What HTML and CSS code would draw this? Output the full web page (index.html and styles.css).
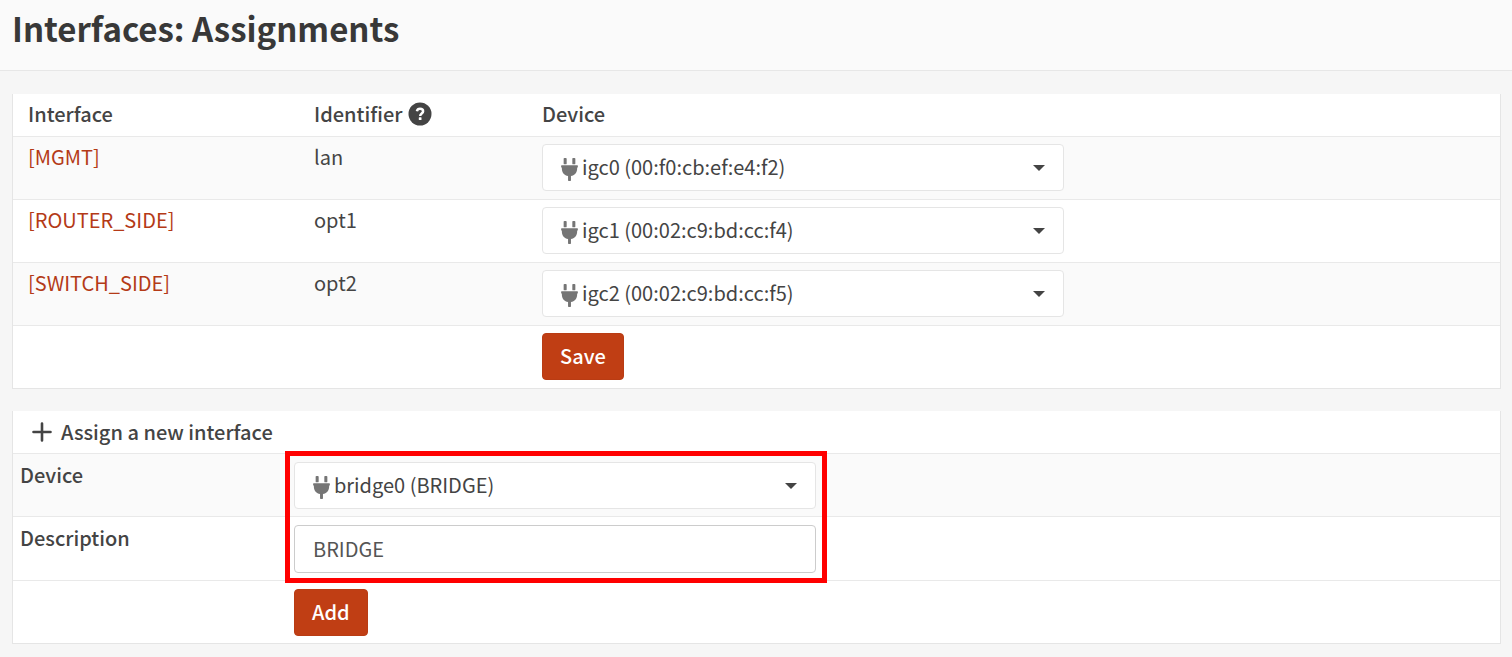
FILE: index.html
```html
<!DOCTYPE html>
<html lang="en">
<head>
<meta charset="utf-8">
<meta name="viewport" content="width=device-width, initial-scale=1">
<title>Interfaces: Assignments</title>
<link rel="stylesheet" href="styles.css">
</head>
<body>
<svg class="sprite" aria-hidden="true">
  <symbol id="plug" viewBox="0 0 16 22">
    <rect x="2.4" y="0" width="2.9" height="6" rx="0.8"/>
    <rect x="10.7" y="0" width="2.9" height="6" rx="0.8"/>
    <path d="M0.4 7H15.6Q16 7 16 7.4V8.600Q16 9.100 15.500 9.200L15.300 9.300V10.500C15.200 14 12.800 16.800 9.400 17.300V21.400Q9.400 22 8.800 22H7.200Q6.600 22 6.600 21.400V17.300C3.200 16.800 0.800 14 0.700 10.500V9.300L0.500 9.200Q0 9.100 0 8.600V7.400Q0 7 0.400 7Z"/>
  </symbol>
</svg>
<header class="page-head">
  <h1 class="page-title">Interfaces: Assignments</h1>
</header>
<main class="content">
  <form class="panel">
    <table class="table">
      <colgroup><col class="col-name"><col class="col-id"><col></colgroup>
      <thead>
        <tr>
          <th class="indent" scope="col">Interface</th>
          <th scope="col"><span class="with-icon">Identifier
            <svg class="help" viewBox="0 0 24 24" role="img" aria-label="Help"><circle cx="12" cy="12" r="11.500" fill="#444"/><path d="M8.900 9.200C9.300 7.500 10.400 6.800 12 6.800C13.900 6.800 15.100 7.800 15.100 9.300C15.100 11.500 12.200 11.500 12.200 13.900" fill="none" stroke="#fff" stroke-width="2.500"/><rect x="10.800" y="15.300" width="2.700" height="2.700" rx="0.500" fill="#fff"/></svg></span></th>
          <th scope="col">Device</th>
        </tr>
      </thead>
      <tbody>
        <tr>
          <td class="indent"><a class="link" href="#lan">[MGMT]</a></td>
          <td>lan</td>
          <td><div class="picker"><svg class="plug"><use href="#plug"/></svg><select class="field select" aria-label="Device for lan"><option>igc0 (00:f0:cb:ef:e4:f2)</option></select></div></td>
        </tr>
        <tr>
          <td class="indent"><a class="link" href="#opt1">[ROUTER_SIDE]</a></td>
          <td>opt1</td>
          <td><div class="picker"><svg class="plug"><use href="#plug"/></svg><select class="field select" aria-label="Device for opt1"><option>igc1 (00:02:c9:bd:cc:f4)</option></select></div></td>
        </tr>
        <tr>
          <td class="indent"><a class="link" href="#opt2">[SWITCH_SIDE]</a></td>
          <td>opt2</td>
          <td><div class="picker"><svg class="plug"><use href="#plug"/></svg><select class="field select" aria-label="Device for opt2"><option>igc2 (00:02:c9:bd:cc:f5)</option></select></div></td>
        </tr>
        <tr>
          <td></td>
          <td></td>
          <td><button class="btn" type="button">Save</button></td>
        </tr>
      </tbody>
    </table>
  </form>
  <form class="panel">
    <table class="table new-table">
      <colgroup><col class="col-label"><col></colgroup>
      <thead>
        <tr>
          <th class="new-head" colspan="2"><span class="with-icon"><svg class="plus" viewBox="0 0 20 20" aria-hidden="true"><path d="M10 1.500V18.500M1.500 10H18.500" fill="none" stroke="#444" stroke-width="2.600" stroke-linecap="round"/></svg>Assign a new interface</span></th>
        </tr>
      </thead>
      <tbody>
        <tr>
          <td><label class="label" for="new-device">Device</label></td>
          <td><div class="picker highlighted"><svg class="plug"><use href="#plug"/></svg><select class="field select" id="new-device"><option>bridge0 (BRIDGE)</option></select></div></td>
        </tr>
        <tr>
          <td><label class="label" for="new-desc">Description</label></td>
          <td><input class="field input" id="new-desc" type="text" value="BRIDGE"></td>
        </tr>
        <tr>
          <td></td>
          <td><button class="btn" type="button">Add</button></td>
        </tr>
      </tbody>
    </table>
  </form>
</main>
</body>
</html>
```
FILE: styles.css
```css
* { box-sizing: border-box; }

body {
  margin: 0;
  background: #f6f6f6;
  color: #444;
  font: 400 20px/28px "Noto Sans CJK SC", "Open Sans", sans-serif;
}

.sprite { position: absolute; width: 0; height: 0; }

.page-head {
  padding: 6px 12px 20px;
  background: #fafafa;
  border-bottom: 1px solid #e7e7e7;
}

.page-title {
  margin: 0;
  color: #383838;
  font-size: 33px;
  font-weight: 700;
  line-height: 44px;
}

.content {
  display: flex;
  flex-direction: column;
  gap: 22px;
  padding: 23px 11px 13px 12px;
}

.panel {
  margin: 0;
  background: #fff;
  border: 1px solid #e5e5e5;
  border-top: 0;
}

.table {
  width: 100%;
  border-collapse: separate;
  border-spacing: 0;
  table-layout: fixed;
}

.col-name { width: 293px; }
.col-id { width: 228px; }
.col-label { width: 273px; }

.table th,
.table td {
  padding: 7px 8px;
  text-align: left;
  vertical-align: top;
}

.table th {
  padding: 6px 8px 8px;
  font-weight: 500;
}

.table td {
  padding-bottom: 8px;
  border-top: 1px solid #e9e9e9;
}

.table td:not(:last-child) { padding-top: 6px; }

.new-table td:last-child { padding: 8px 8px 7px; }
.table.new-table td:first-child { padding: 7px; }
.table.new-table th { padding: 7px 19px; }

.table tbody tr:nth-child(odd) td { background: #fafafa; }
.table tbody tr:last-child td,
.table tbody tr:nth-child(even) td { background: #fff; }

.table .indent { padding-left: 15px; }

.with-icon { display: flex; align-items: center; gap: 6px; }
.new-table .with-icon { gap: 9px; }
.help { width: 24px; height: 24px; }
.plus { width: 20px; height: 20px; }

.link { color: #b43a17; text-decoration: none; }
.label { font-weight: 500; }

.picker {
  position: relative;
  max-width: 522px;
}

.plug {
  position: absolute;
  top: 14px;
  left: 19px;
  width: 17px;
  height: 23px;
  fill: #757575;
  pointer-events: none;
}

.picker::after {
  content: "";
  position: absolute;
  top: 21px;
  right: 19px;
  border: 6px solid transparent;
  border-top-color: #444;
  border-bottom: 0;
  pointer-events: none;
}

.highlighted::before {
  content: "";
  position: absolute;
  inset: -11px -11px -74px -9px;
  border: 5px solid #f00;
  pointer-events: none;
}

.field {
  display: block;
  width: 100%;
  max-width: 522px;
  height: 47px;
  margin: 0;
  background: #fff;
  border-radius: 4px;
  font: inherit;
}

.select {
  appearance: none;
  padding: 0 44px 1px 39px;
  border: 1px solid #e5e5e5;
  color: #444;
}

.input {
  height: 48px;
  padding: 0 18px 2px;
  border: 1px solid #ccc;
  color: #555;
}

.btn {
  display: block;
  height: 47px;
  padding: 0 17px 1px;
  background: #c03e14;
  border: 1px solid #b93c14;
  border-radius: 4px;
  color: #fff;
  font: inherit;
  font-weight: 500;
}
```
